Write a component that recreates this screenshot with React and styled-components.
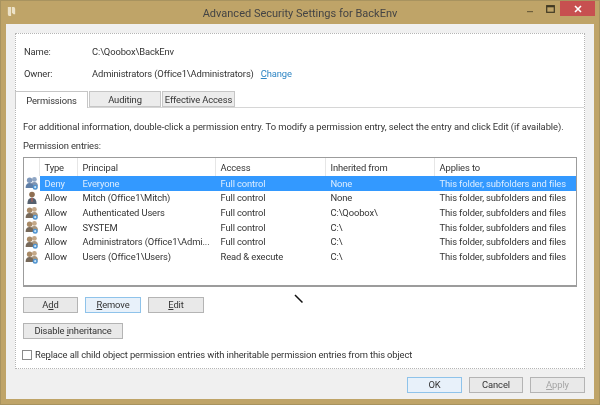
import React from "react";
import styled, { createGlobalStyle } from "styled-components";

const Global = createGlobalStyle`
  html, body { margin: 0; padding: 0; background: #bfa468; }
  #root { width: 600px; height: 405px; overflow: hidden; }
  * { box-sizing: border-box; }
`;

const Frame = styled.div`
  position: relative;
  width: 600px;
  height: 405px;
  background: #bfa468;
  border: 1px solid #a8935f;
  padding: 0 5px 5px;
  display: flex;
  flex-direction: column;
  font-family: Roboto, "Open Sans", sans-serif;
  font-size: 9.4px;
  letter-spacing: -0.12px;
  color: #333;
  filter: blur(0.3px);
`;
const TitleBar = styled.div`
  height: 23px;
  flex: none;
  display: flex;
  align-items: center;
  justify-content: center;
  position: relative;
  font-size: 11px;
  letter-spacing: 0;
  color: #444;
  padding-top: 1px;
`;
const AppIcon = styled.svg`
  position: absolute;
  left: 1px;
  top: 5px;
`;
const WinControls = styled.div`
  position: absolute;
  right: -1px;
  top: 0;
  display: flex;
  align-items: flex-start;
`;
const WinButton = styled.div`
  width: ${(p) => p.$w}px;
  height: 15px;
  display: flex;
  align-items: center;
  justify-content: center;
  background: ${(p) => p.$bg || "transparent"};
`;
const Client = styled.div`
  flex: 1;
  background: #f0f0f0;
  padding: 9px 9px 6px;
  display: flex;
  flex-direction: column;
`;
const Panel = styled.div`
  height: 336px;
  flex: none;
  background: #fff;
  border: 1px dotted #b5b5b5;
  display: flex;
  flex-direction: column;
  padding: 6px 0 0 0;
`;
const InfoRow = styled.div`
  height: 22px;
  display: flex;
  align-items: center;
  padding-left: 8px;
`;
const InfoLabel = styled.span`
  width: 68px;
`;
const LinkText = styled.a`
  color: #2f86c4;
  margin-left: 7px;
`;
const Tabs = styled.div`
  margin-top: 7px;
  margin-left: -1px;
  height: 17px;
  border-bottom: 1px solid #d6d6d6;
  display: flex;
  gap: 1px;
`;
const Tab = styled.div`
  width: ${(p) => p.$w}px;
  height: ${(p) => (p.$active ? 17 : 16)}px;
  background: ${(p) => (p.$active ? "#fff" : "#ececec")};
  border: 1px solid #c6c6c6;
  border-bottom: ${(p) => (p.$active ? "none" : "1px solid #c6c6c6")};
  display: flex;
  align-items: center;
  justify-content: center;
  white-space: nowrap;
`;
const Body = styled.div`
  padding: 0 8px 0 7px;
  display: flex;
  flex-direction: column;
`;
const Intro = styled.div`
  margin-top: 11px;
  height: 15px;
  line-height: 15px;
  white-space: nowrap;
  letter-spacing: -0.05px;
`;
const EntriesLabel = styled.div`
  margin-top: 4px;
  height: 15px;
  line-height: 15px;
`;
const Table = styled.div`
  margin-top: 4px;
  height: 130px;
  width: 554px;
  border: 1px solid #9c9c9c;
  border-bottom-width: 2px;
  background: #fff;
  display: flex;
  flex-direction: column;
`;
const cols = "16px 38px 138px 110px 109px 1fr";
const HeaderRow = styled.div`
  height: 18px;
  flex: none;
  display: grid;
  grid-template-columns: ${cols};
  align-items: center;
`;
const HeaderCell = styled.div`
  height: 100%;
  display: flex;
  align-items: center;
  padding-left: 4.5px;
  border-right: ${(p) => (p.$last ? "none" : "1px solid #e6e6e6")};
`;
const Row = styled.div`
  height: 14.67px;
  flex: none;
  display: grid;
  grid-template-columns: ${cols};
  align-items: center;
`;
const Cell = styled.div`
  height: 100%;
  min-width: 0;
  display: flex;
  align-items: center;
  padding-left: 4.5px;
  white-space: nowrap;
  background: ${(p) => (p.$sel ? "#3399ff" : "transparent")};
  color: ${(p) => (p.$sel ? "#dcedff" : "inherit")};
`;
const IconCell = styled.div`
  height: 100%;
  display: flex;
  align-items: center;
  justify-content: center;
`;
const ButtonRow = styled.div`
  margin-top: 10px;
  display: flex;
  gap: 7px;
`;
const Btn = styled.div`
  width: ${(p) => p.$w}px;
  height: 16px;
  border: 1px solid ${(p) => (p.$focus ? "#8fc3ea" : "#b4b4b4")};
  background: ${(p) => (p.$focus ? "#e8f1fa" : "#e9e9e9")};
  color: ${(p) => (p.$disabled ? "#a5a5a5" : "#333")};
  white-space: pre;
  text-align: center;
  line-height: 14px;
`;
const DisableWrap = styled.div`
  margin-top: 10px;
`;
const CheckRow = styled.div`
  margin-top: 10px;
  margin-left: -1px;
  display: flex;
  align-items: center;
  gap: 3px;
  white-space: nowrap;
`;
const CheckBox = styled.div`
  width: 10px;
  height: 10px;
  background: #fff;
  border: 1px solid #8a8a8a;
  flex: none;
`;
const Footer = styled.div`
  margin-top: 8px;
  display: flex;
  justify-content: flex-end;
  gap: 7px;
`;
const Cursor = styled.svg`
  position: absolute;
  left: 292px;
  top: 292px;
`;

const UsersIcon = ({ sel }) => (
  <svg width="14" height="14" viewBox="0 0 14 14">
    <circle cx="9.4" cy="3.4" r="2.4" fill={sel ? "#8fa6c4" : "#c4a888"} />
    <path d="M5.5 10.5 Q5.5 6 9.4 6 Q13 6 13 10.5Z" fill={sel ? "#7f95b3" : "#a8967f"} />
    <circle cx="4.6" cy="4.2" r="2.7" fill={sel ? "#7f98bb" : "#a98a66"} />
    <path d="M0.6 12 Q0.6 7 4.6 7 Q8.6 7 8.6 12Z" fill={sel ? "#5f7ea6" : "#77695a"} />
    <circle cx="10.2" cy="11.2" r="2.5" fill="#4f93cf" />
    <circle cx="10.2" cy="11.2" r="1.1" fill="#cfe6f7" />
  </svg>
);
const UserIcon = () => (
  <svg width="14" height="14" viewBox="0 0 14 14">
    <circle cx="7" cy="3.6" r="2.8" fill="#8f6f52" />
    <path d="M2.4 13 Q2.4 6.8 7 6.8 Q11.6 6.8 11.6 13Z" fill="#55606e" />
    <path d="M6.2 7 L7.8 7 L7.4 11 L6.6 11Z" fill="#b9645a" />
  </svg>
);

const headers = ["Type", "Principal", "Access", "Inherited from", "Applies to"];
const rows = [
  ["Deny", "Everyone", "Full control", "None", true, true],
  ["Allow", "Mitch (Office1\\Mitch)", "Full control", "None", false, false],
  ["Allow", "Authenticated Users", "Full control", "C:\\Qoobox\\", false, true],
  ["Allow", "SYSTEM", "Full control", "C:\\", false, true],
  ["Allow", "Administrators (Office1\\Admi...", "Full control", "C:\\", false, true],
  ["Allow", "Users (Office1\\Users)", "Read & execute", "C:\\", false, true],
];

export default function App() {
  return (
    <>
      <Global />
      <Frame>
        <TitleBar>
          <AppIcon width="9" height="11" viewBox="0 0 11 13">
            <path d="M1 1 H5 V12 H2 L1 10Z M6 1 H9 L10 3 V10 H8 L6 8Z" fill="#ece2c8" />
          </AppIcon>
          Advanced Security Settings for BackEnv
          <WinControls>
            <WinButton $w={21}>
              <svg width="8" height="8" viewBox="0 0 8 8"><rect x="1" y="6" width="6" height="1.2" fill="#6e5f3c" /></svg>
            </WinButton>
            <WinButton $w={20}>
              <svg width="9" height="8" viewBox="0 0 9 8"><rect x="0.7" y="0.7" width="7.6" height="6.6" fill="none" stroke="#3f3823" strokeWidth="1.2" /><rect x="0.7" y="0.7" width="7.6" height="1.6" fill="#3f3823" /></svg>
            </WinButton>
            <WinButton $w={35} $bg="#c75050">
              <svg width="8" height="8" viewBox="0 0 8 8"><path d="M1 1 L7 7 M7 1 L1 7" stroke="#fff" strokeWidth="1.6" /></svg>
            </WinButton>
          </WinControls>
        </TitleBar>
        <Client>
          <Panel>
            <InfoRow>
              <InfoLabel>Name:</InfoLabel>
              <span>C:\Qoobox\BackEnv</span>
            </InfoRow>
            <InfoRow>
              <InfoLabel>Owner:</InfoLabel>
              <span>Administrators (Office1\Administrators)</span>
              <LinkText><u>C</u>hange</LinkText>
            </InfoRow>
            <Tabs>
              <Tab $w={73} $active>Permissions</Tab>
              <Tab $w={72}>Auditing</Tab>
              <Tab $w={73}>Effective Access</Tab>
            </Tabs>
            <Body>
              <Intro>For additional information, double-click a permission entry. To modify a permission entry, select the entry and click Edit (if available).</Intro>
              <EntriesLabel>Permission entries:</EntriesLabel>
              <Table>
                <HeaderRow>
                  <HeaderCell />
                  {headers.map((h, i) => (
                    <HeaderCell key={h} $last={i === 4}>{h}</HeaderCell>
                  ))}
                </HeaderRow>
                {rows.map((r) => (
                  <Row key={r[1]}>
                    <IconCell>{r[5] ? <UsersIcon sel={r[4]} /> : <UserIcon />}</IconCell>
                    <Cell $sel={r[4]}>{r[0]}</Cell>
                    <Cell $sel={r[4]}>{r[1]}</Cell>
                    <Cell $sel={r[4]}>{r[2]}</Cell>
                    <Cell $sel={r[4]}>{r[3]}</Cell>
                    <Cell $sel={r[4]}>This folder, subfolders and files</Cell>
                  </Row>
                ))}
              </Table>
              <ButtonRow>
                <Btn $w={55}>A<u>d</u>d</Btn>
                <Btn $w={56} $focus><u>R</u>emove</Btn>
                <Btn $w={56}><u>E</u>dit</Btn>
              </ButtonRow>
              <DisableWrap>
                <Btn $w={100}>Disable <u>i</u>nheritance</Btn>
              </DisableWrap>
              <CheckRow>
                <CheckBox />
                <span>Re<u>p</u>lace all child object permission entries with inheritable permission entries from this object</span>
              </CheckRow>
            </Body>
          </Panel>
          <Footer>
            <Btn $w={55} $focus>OK</Btn>
            <Btn $w={54}>Cancel</Btn>
            <Btn $w={55} $disabled><u>A</u>pply</Btn>
          </Footer>
        </Client>
        <Cursor width="12" height="12" viewBox="0 0 12 12">
          <path d="M2 2 L9.5 9.5" stroke="#111" strokeWidth="1.5" />
        </Cursor>
      </Frame>
    </>
  );
}
